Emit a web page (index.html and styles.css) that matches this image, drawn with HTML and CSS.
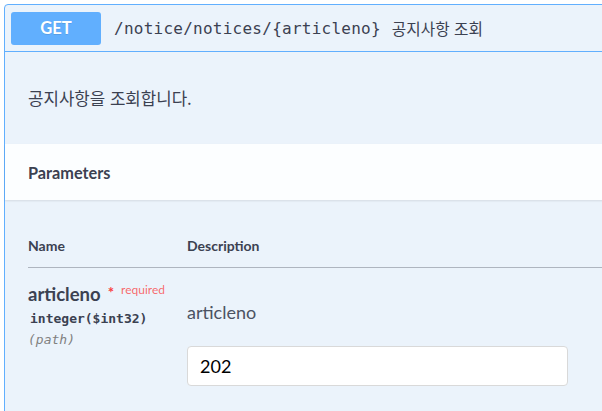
FILE: index.html
```html
<!DOCTYPE html>
<html lang="ko">
<head>
<meta charset="utf-8">
<link rel="stylesheet" href="styles.css">
</head>
<body>
<div class="opblock">
  <div class="summary">
    <span class="method">GET</span>
    <span class="path">/notice/notices/{articleno}</span>
    <span class="summary-desc">공지사항 조회</span>
  </div>
  <div class="description">공지사항을 조회합니다.</div>
  <div class="section-header"><h4>Parameters</h4></div>
  <div class="params">
    <div class="row head">
      <div class="col-name">Name</div>
      <div class="col-desc">Description</div>
    </div>
    <div class="row body">
      <div class="col-name">
        <div class="pname">articleno<span class="star">*</span><span class="req">required</span></div>
        <div class="ptype">integer($int32)</div>
        <div class="pin">(path)</div>
      </div>
      <div class="col-desc">
        <div class="pdesc">articleno</div>
        <div class="input">202</div>
      </div>
    </div>
  </div>
</div>
</body>
</html>
```
FILE: styles.css
```css
html, body {
  margin: 0;
  padding: 0;
  background: #ffffff;
  overflow: hidden;
  width: 602px;
  height: 411px;
}
body {
  font-family: Lato, "Noto Sans CJK KR", sans-serif;
  color: #3b4151;
}
.opblock {
  margin: 4px 0 0 4px;
  width: 660px;
  height: 440px;
  border: 1px solid #61affe;
  border-radius: 4px 0 0 0;
  background: #ebf3fb;
  box-sizing: border-box;
}
.summary {
  display: flex;
  align-items: center;
  height: 46px;
  padding-left: 6px;
  border-bottom: 1px solid #61affe;
}
.method {
  width: 90px;
  height: 33px;
  background: #61affe;
  border-radius: 3px;
  color: #fff;
  font-weight: 700;
  font-size: 16.5px;
  display: flex;
  align-items: center;
  justify-content: center;
  text-shadow: 0 1px 0 rgba(0,0,0,.1);
}
.path {
  margin-left: 13px;
  font-family: "DejaVu Sans Mono", monospace;
  font-size: 16px;
  letter-spacing: 0.25px;
  color: #3b4151;
}
.summary-desc {
  margin-left: 11px;
  font-family: "Noto Sans CJK KR", sans-serif;
  font-size: 15.7px;
  color: #3b4151;
}
.description {
  height: 92px;
  display: flex;
  align-items: center;
  padding-left: 23px;
  font-family: "Noto Sans CJK KR", sans-serif;
  font-size: 16.8px;
  color: #3b4151;
}
.section-header {
  height: 56px;
  display: flex;
  align-items: center;
  padding-left: 23px;
  background: rgba(255,255,255,.85);
  box-shadow: 0 1px 2px rgba(0,0,0,.1);
}
.section-header h4 {
  margin: 0;
  font-size: 16.3px;
  font-weight: 700;
  color: #3b4151;
}
.params {
  padding: 0 0 0 23px;
}
.row {
  display: flex;
}
.col-name {
  width: 159px;
  flex: none;
}
.col-desc {
  flex: 1;
}
.row.head {
  padding-top: 37px;
  padding-bottom: 12px;
  border-bottom: 1px solid rgba(59,65,81,.35);
  font-size: 14px;
  font-weight: 700;
  line-height: 18px;
}
.row.body .col-name {
  padding-top: 15px;
}
.pname {
  font-size: 18.5px;
  font-weight: 700;
  line-height: 22px;
  white-space: nowrap;
}
.star {
  color: #f93e3e;
  font-size: 15px;
  font-weight: 700;
  padding-left: 7px;
  position: relative;
  top: -3px;
}
.req {
  color: rgba(255,0,0,.6);
  font-size: 12px;
  font-weight: 400;
  padding-left: 7px;
  position: relative;
  top: -7px;
}
.ptype {
  margin-top: 2px;
  font-family: "DejaVu Sans Mono", monospace;
  font-size: 13px;
  font-weight: 700;
  line-height: 18px;
  padding-left: 2px;
}
.pin {
  margin-top: 3px;
  font-family: "DejaVu Sans Mono", monospace;
  font-size: 13px;
  font-style: italic;
  color: #808080;
  line-height: 18px;
}
.row.body .col-desc {
  padding-top: 33px;
}
.pdesc {
  font-size: 18px;
  line-height: 22px;
  color: #4c5262;
}
.input {
  margin-top: 23px;
  width: 381px;
  height: 40px;
  box-sizing: border-box;
  border: 1px solid #d9d9d9;
  border-radius: 4px;
  background: #fff;
  padding-left: 12px;
  display: flex;
  align-items: center;
  font-size: 18px;
  color: #000;
}
```
